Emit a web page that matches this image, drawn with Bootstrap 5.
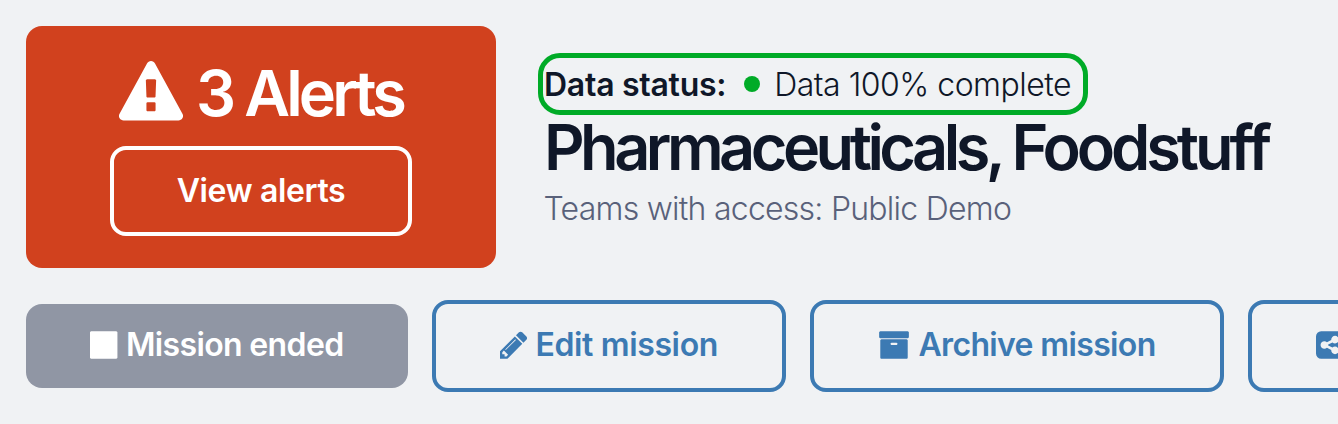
<!DOCTYPE html>
<html lang="en">
<head>
<meta charset="utf-8">
<meta name="viewport" content="width=device-width, initial-scale=1">
<title>Mission</title>
<link href="https://cdn.jsdelivr.net/npm/bootstrap@5.3.0/dist/css/bootstrap.min.css" rel="stylesheet">
<style>
  body { background: #f0f2f4; color: #0f1728; font: 400 32px/48px Inter, "Liberation Sans", sans-serif; overflow: hidden; }
  .page { padding: 26px 0 0 26px; overflow: hidden; }
  .alerts-panel { width: 470px; height: 242px; background: #d1411e; border-radius: 16px; padding-top: 27px; }
  .title { font-size: 63px; line-height: 80px; font-weight: 600; letter-spacing: -3.9px; margin: 0; white-space: nowrap; }
  .title .glyph { width: 64px; height: 64px; margin-right: 13px; }
  .mission-title { line-height: 65px; letter-spacing: -4.53px; }
  .mission-title .loose { letter-spacing: -4.05px; }
  .glyph { width: 1em; height: 1em; fill: currentColor; flex: none; }
  .action { --bs-btn-font-size: 32px; --bs-btn-line-height: 48px; --bs-btn-font-weight: 600; --bs-btn-border-width: 4px; --bs-btn-border-radius: 16px; --bs-btn-padding-x: 64px; --bs-btn-padding-y: 0; --bs-btn-color: #3c7ab3; --bs-btn-border-color: #3c7ab3; height: 92px; white-space: nowrap; flex: none; gap: 8px; padding-bottom: 3px; letter-spacing: -.36px; }
  .action-view { --bs-btn-color: #fff; --bs-btn-border-color: #fff; width: 302px; height: 90px; margin-top: 13px; padding: 0; }
  .action-ended { --bs-btn-color: #fff; --bs-btn-bg: #9096a4; --bs-btn-border-width: 0; width: 382px; height: 84px; letter-spacing: -.64px; }
  .action-edit { width: 354px; }
  .action-archive { width: 414px; letter-spacing: -.64px; }
  .info { padding: 27px 0 0 48px; }
  .status { width: 550px; height: 62px; border: 5px solid #00ab27; border-radius: 22px; margin-left: -6.5px; padding: 2px 0 0 1.5px; white-space: nowrap; }
  .status .fw-semibold { letter-spacing: -.27px; }
  .dot { width: 16px; height: 16px; background: #00ab27; margin: -2px 14px 0 18px; }
  .light { font-weight: 300; letter-spacing: -.5px; }
  .teams { color: #59617a; letter-spacing: -.75px; margin: 5px 0 0 -.5px; }
  .actions { margin-top: 32px; gap: 24px; }
</style>
</head>
<body>
<main class="page">
  <div class="d-flex align-items-start">
    <section class="alerts-panel text-white d-flex flex-column align-items-center">
      <h2 class="title d-flex align-items-center">
        <svg class="glyph" viewBox="0 0 1792 1792"><path d="M1024 1375v-190q0-14-9.5-23.5t-22.5-9.5h-192q-13 0-22.5 9.5t-9.5 23.5v190q0 14 9.5 23.5t22.5 9.5h192q13 0 22.5-9.5t9.5-23.5zm-2-374l18-459q0-12-10-19-13-11-24-11h-220q-11 0-24 11-10 7-10 21l17 457q0 10 10 16.5t24 6.5h185q14 0 23.5-6.5t10.5-16.5zm-14-934l768 1408q35 63-2 126-17 29-46.5 46t-63.5 17h-1536q-34 0-63.5-17t-46.5-46q-37-63-2-126l768-1408q17-31 47-49t65-18 65 18 47 49z"/></svg>
        <span>3 Alerts</span>
      </h2>
      <button class="btn action action-view">View alerts</button>
    </section>
    <section class="info">
      <div class="status d-flex align-items-center">
        <span class="fw-semibold">Data status:</span><span class="dot rounded-circle"></span><span class="light">Data 100% complete</span>
      </div>
      <h1 class="title mission-title">Pharmaceuticals, <span class="loose">Foodstuff</span></h1>
      <div class="teams light">Teams with access: Public Demo</div>
    </section>
  </div>
  <div class="actions d-flex align-items-center">
    <button class="btn action action-ended d-flex align-items-center justify-content-center">
      <svg class="glyph" style="width:27.43px" viewBox="0 0 1536 1792"><path d="M1536 192v1408q0 26-19 45t-45 19h-1408q-26 0-45-19t-19-45v-1408q0-26 19-45t45-19h1408q26 0 45 19t19 45z"/></svg>
      <span>Mission ended</span>
    </button>
    <button class="btn action action-edit d-flex align-items-center justify-content-center">
      <svg class="glyph" style="width:27.43px" viewBox="128 0 1536 1792"><path d="M491 1536l91-91-235-235-91 91v107h128v128h107zm523-928q0-22-22-22-10 0-17 7l-542 542q-7 7-7 17 0 22 22 22 10 0 17-7l542-542q7-7 7-17zm-54-192l416 416-832 832h-416v-416zm683 96q0 53-37 90l-166 166-416-416 166-165q36-38 90-38 53 0 91 38l235 234q37 39 37 91z"/></svg>
      <span>Edit mission</span>
    </button>
    <button class="btn action action-archive d-flex align-items-center justify-content-center">
      <svg class="glyph" viewBox="0 0 1792 1792"><path d="M1088 832q0-26-19-45t-45-19h-256q-26 0-45 19t-19 45 19 45 45 19h256q26 0 45-19t19-45zm576-192v960q0 26-19 45t-45 19h-1408q-26 0-45-19t-19-45v-960q0-26 19-45t45-19h1408q26 0 45 19t19 45zm64-448v256q0 26-19 45t-45 19h-1536q-26 0-45-19t-19-45v-256q0-26 19-45t45-19h1536q26 0 45 19t19 45z"/></svg>
      <span>Archive mission</span>
    </button>
    <button class="btn action d-flex align-items-center justify-content-start" aria-label="Share">
      <svg class="glyph" style="width:27.43px" viewBox="0 0 1536 1792"><path transform="matrix(1 0 0 -1 0 1536)" d="M1280 341q0 88 -62.5 151t-150.5 63q-84 0 -145 -58l-241 120q2 16 2 23t-2 23l241 120q61 -58 145 -58q88 0 150.5 63t62.5 151t-62.5 150.5t-150.5 62.5t-151 -62.5t-63 -150.5q0 -7 2 -23l-241 -120q-62 57 -145 57q-88 0 -150.5 -62.5t-62.5 -150.5t62.5 -150.5t150.5 -62.5q83 0 145 57l241 -120q-2 -16 -2 -23q0 -88 63 -150.5t151 -62.5t150.5 62.5t62.5 150.5zM1536 1120v-960q0 -119 -84.5 -203.5t-203.5 -84.5h-960q-119 0 -203.5 84.5t-84.5 203.5v960q0 119 84.5 203.5t203.5 84.5h960q119 0 203.5 -84.5t84.5 -203.5z"/></svg>
    </button>
  </div>
</main>
<script src="https://cdn.jsdelivr.net/npm/bootstrap@5.3.0/dist/js/bootstrap.bundle.min.js"></script>
</body>
</html>
